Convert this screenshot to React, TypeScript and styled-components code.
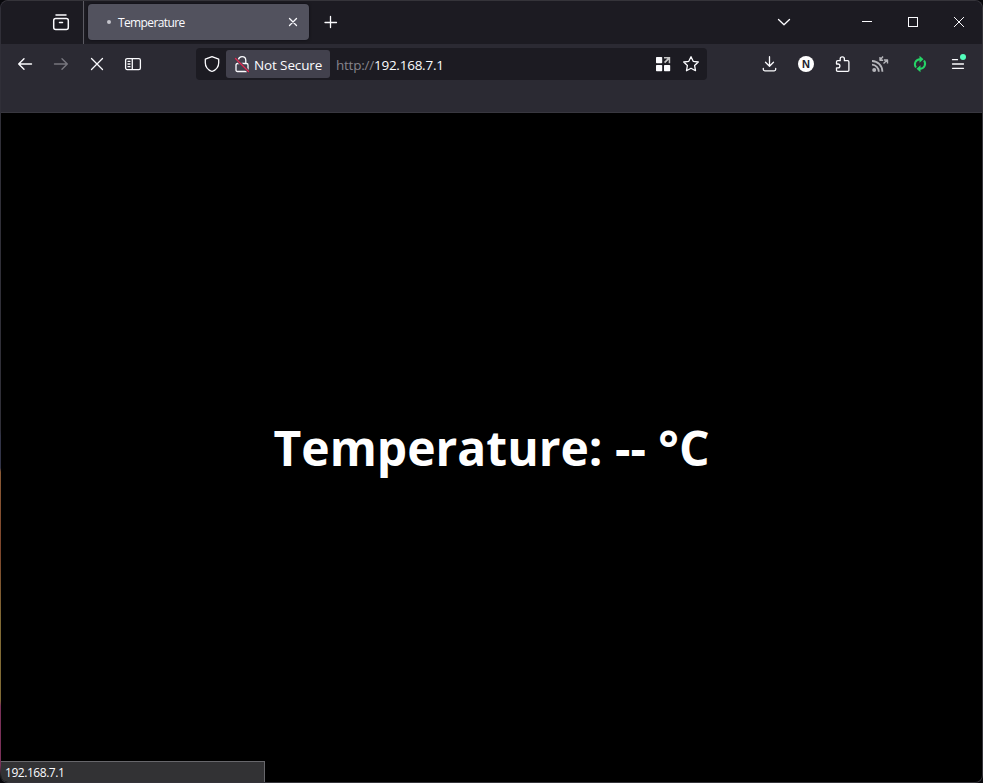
import React from 'react';
import styled, { createGlobalStyle } from 'styled-components';

const GlobalStyle = createGlobalStyle`
  *, *::before, *::after { box-sizing: border-box; }
  html, body, #root { margin: 0; height: 100%; background: #08080c; }
  body { overflow: hidden; font-family: "Open Sans", "Noto Sans", sans-serif; color: #fbfbfe; }
`;

const Window = styled.div`
  position: relative;
  width: 983px;
  height: 783px;
  display: flex;
  flex-direction: column;
  border: 1px solid #35343a;
  border-left-color: transparent;
  border-radius: 8px;
  overflow: hidden;
  background:
    linear-gradient(#1c1b22, #1c1b22) padding-box,
    linear-gradient(#302f38 0 430px, #323448 436px 468px, #8a5a35 472px, #7d452c 550px, #806a35 620px 700px, #7a3159 706px 765px, #222 775px) border-box;
`;

const TabBar = styled.header`
  height: 43px;
  flex: none;
  display: flex;
  align-items: center;
  background: #1c1b22;
`;

const ViewButton = styled.div`
  width: 83px;
  height: 43px;
  padding: 0 13px 1px 0;
  display: flex;
  align-items: center;
  justify-content: flex-end;
  border-right: 1px solid #5b5a62;
`;

const Tab = styled.div`
  width: 221px;
  height: 36px;
  margin: 0 0 1px 4px;
  padding: 0 7px 0 19px;
  display: flex;
  align-items: center;
  border-radius: 4px;
  background: #52525e;
  box-shadow: 0 0 3px #0b0b10;
`;

const LoadingDot = styled.i`
  width: 4px;
  height: 4px;
  margin: 0 7px 1px 0;
  border-radius: 50%;
  background: #c5c5cc;
`;

const TabTitle = styled.span`
  flex: 1;
  padding-top: 2px;
  font-size: 12px;
  line-height: 16px;
  letter-spacing: -0.62px;
`;

const Cell = styled.div<{ $w?: number; $gap?: number }>`
  width: ${p => p.$w ?? 36}px;
  height: 32px;
  margin-left: ${p => p.$gap ?? 0}px;
  flex: none;
  display: flex;
  align-items: center;
  justify-content: center;
`;

const TabSpacer = styled.div`
  flex: 1;
`;

const TabTools = styled.div`
  display: flex;
  align-items: center;
  margin-bottom: 1px;
`;

const Toolbar = styled.nav`
  height: 69px;
  flex: none;
  display: flex;
  align-items: flex-start;
  padding: 4px 0 0 6px;
  background: #2b2a33;
  border-bottom: 1px solid #38373f;
`;

const AddressBar = styled.div`
  width: 511px;
  height: 32px;
  margin-left: 45px;
  padding: 0 2px;
  display: flex;
  align-items: center;
  border-radius: 4px;
  background: #1c1b22;
`;

const SecurityChip = styled.div`
  width: 104px;
  height: 28px;
  padding-left: 7px;
  display: flex;
  align-items: center;
  gap: 3px;
  border-radius: 3px;
  background: #42414d;
  font-size: 13.5px;
  letter-spacing: -0.12px;
  white-space: nowrap;
`;

const ChipLabel = styled.span`
  padding-top: 2px;
`;

const Url = styled.span`
  flex: 1;
  margin-left: 6px;
  padding-top: 2px;
  font-size: 13.5px;
  letter-spacing: -0.24px;
`;

const Scheme = styled.span`
  color: #85848c;
`;

const Page = styled.main`
  flex: 1;
  display: flex;
  align-items: center;
  justify-content: center;
  background: #000;
`;

const Reading = styled.h1`
  margin: 0;
  font: 700 48px/66px "Open Sans", sans-serif;
  color: #fff;
  white-space: nowrap;
`;

const StatusPanel = styled.div`
  position: absolute;
  left: 0;
  bottom: 0;
  width: 264px;
  height: 21px;
  padding-left: 4px;
  border: solid #67676b;
  border-width: 1px 1px 0 0;
  background: #323234;
  font-size: 12px;
  line-height: 21px;
  letter-spacing: -0.45px;
`;

const Badge = styled.div`
  width: 16px;
  height: 16px;
  border-radius: 50%;
  background: #fff;
  color: #24232b;
  font: 700 11px/16px "Liberation Sans", sans-serif;
  text-align: center;
`;

const Svg = styled.svg`
  width: 18px;
  height: 18px;
  flex: none;
  overflow: visible;
  fill: none;
  stroke: currentColor;
  stroke-width: 1.3;
  stroke-linecap: round;
  stroke-linejoin: round;
`;

const Icon = ({ children, color }: { children: React.ReactNode; color?: string }) => (
  <Svg viewBox="0 0 18 18" color={color ?? '#fbfbfe'}>{children}</Svg>
);

export default function App() {
  return (
    <>
      <GlobalStyle />
      <Window>
        <TabBar>
          <ViewButton>
            <Icon>
              <path d="M4 2h10" strokeWidth="1.5" />
              <rect x="1.7" y="5.6" width="14.6" height="10.8" rx="2" strokeWidth="1.5" />
              <path d="M7.5 9.6h3" strokeWidth="1.5" />
            </Icon>
          </ViewButton>
          <Tab>
            <LoadingDot />
            <TabTitle>Temperature</TabTitle>
            <Icon><path d="M5.5 5.5l7 7m0-7l-7 7" /></Icon>
          </Tab>
          <TabTools>
            <Cell $gap={4}><Icon><path d="M8.5 3.5v11M3 9.5h11.5" /></Icon></Cell>
          </TabTools>
          <TabSpacer />
          <TabTools>
            <Cell><Icon><path d="M3.5 6.5L9 11.7l5.5-5.2" /></Icon></Cell>
            <Cell $w={46} $gap={42}><Icon><path d="M4 8.5h10" strokeWidth="1" strokeLinecap="butt" /></Icon></Cell>
            <Cell $w={46}><Icon><rect x="4.5" y="4.5" width="9" height="9" strokeWidth="1" strokeLinejoin="miter" /></Icon></Cell>
            <Cell $w={46}><Icon><path d="M4.3 4.3l9.4 9.4m0-9.4l-9.4 9.4" strokeWidth="1" /></Icon></Cell>
          </TabTools>
        </TabBar>
        <Toolbar>
          <Cell><Icon><path d="M15.500 9H2.700M8 3.700L2.700 9 8 14.300" strokeWidth="1.400" /></Icon></Cell>
          <Cell><Icon color="#77767e"><path d="M2.500 9h12.800M10 3.700L15.300 9 10 14.300" strokeWidth="1.400" /></Icon></Cell>
          <Cell><Icon><path d="M3.500 3.500l11 11m0-11l-11 11" /></Icon></Cell>
          <Cell>
            <Icon>
              <rect x="1.600" y="3.600" width="14.800" height="11" rx="1.600" />
              <path d="M8.300 3.800v10.600M4 6.300h2M4 9h2M4 11.700h2" />
            </Icon>
          </Cell>
          <AddressBar>
            <Cell $w={28}>
              <Icon><path d="M9 1.700l6.700 2.500v3.500c0 4.200-2.600 7.200-6.700 8.800-4.100-1.600-6.700-4.600-6.700-8.800V4.200z" /></Icon>
            </Cell>
            <SecurityChip>
              <Icon>
                <path d="M5.300 4.800C5.800 2.800 7.300 1.700 9 1.700c2.200 0 3.800 1.700 3.800 3.800v3M5.200 7v1.500M3 15V10q0-1.500 1.500-1.500h9Q15 8.500 15 10v5q0 1.500-1.500 1.500h-9Q3 16.500 3 15z" />
                <path d="M2.500 3.500l13 13" stroke="#42414d" strokeWidth="3" />
                <path d="M2.500 3.500l13 13" stroke="#e22850" />
              </Icon>
              <ChipLabel>Not Secure</ChipLabel>
            </SecurityChip>
            <Url><Scheme>http://</Scheme>192.168.7.1</Url>
            <Cell $w={28}>
              <Icon>
                <g fill="currentColor" stroke="none">
                  <rect x="2" y="2" width="6.200" height="6.200" rx=".7" />
                  <rect x="2" y="10" width="6.200" height="6.200" rx=".7" />
                  <rect x="10" y="10" width="6.200" height="6.200" rx=".7" />
                  <path d="M10 2h6.200v6.200h-1.500V4.800L11.200 8.200 10 7l3.400-3.400H10z" fill="#c5c5c5" />
                </g>
              </Icon>
            </Cell>
            <Cell $w={28}>
              <Icon>
                <path d="M9 1.700l2.200 4.600 5.100.7-3.700 3.500.9 5.200L9 13.300l-4.500 2.400.9-5.200L1.700 7l5.100-.7z" />
              </Icon>
            </Cell>
          </AddressBar>
          <Cell $gap={44}>
            <Icon><path d="M9.500 1.700v9.300M5.500 7.300l4 4 4-4M3.300 13.300v1q0 1.500 1.500 1.500h9.400q1.500 0 1.500-1.500v-1" /></Icon>
          </Cell>
          <Cell $gap={1}><Badge>N</Badge></Cell>
          <Cell $gap={1}>
            <Icon>
              <path d="M6.200 5.700V4a2.100 2.100 0 0 1 4.200 0v1.700h3.300q1.200 0 1.200 1.200v8.400q0 1.100-1.200 1.100H3.700q-1.200 0-1.200-1.100v-2.500h1.500a1.900 1.900 0 0 0 0-3.800H2.500V6.900q0-1.200 1.200-1.200z" />
            </Icon>
          </Cell>
          <Cell $gap={1}>
            <Icon color="#b6b6bb">
              <circle cx="3.200" cy="14.900" r="2" fill="currentColor" stroke="none" />
              <path d="M1 9.700a7 7 0 0 1 6.800 7M1 6a10.600 10.600 0 0 1 10.400 10.700" strokeWidth="1.800" strokeLinecap="butt" />
              <path d="M12 1.500L9.300 4.700M9 2v3.200h3.200M12.500 8.500l3.800-3.500M13 5h3.500v3.500" strokeWidth="1.400" strokeLinecap="butt" />
            </Icon>
          </Cell>
          <Cell $gap={4}>
            <Icon color="#25d366">
              <path d="M5 12.500C2.500 9 4.500 4.500 9 4.200M13 5.500C15.500 9 13.500 13.500 9 13.800" strokeWidth="2" strokeLinecap="butt" />
              <path d="M8.500.7l4 3.500-4 3.500zM9.500 17.300l-4-3.500 4-3.500z" fill="currentColor" stroke="none" />
            </Icon>
          </Cell>
          <Cell $gap={2}>
            <Icon>
              <path d="M3.500 4.700h5M3.500 9h11M3.500 13.300h11" />
              <circle cx="14" cy="2" r="3" fill="#54ffbd" stroke="none" />
            </Icon>
          </Cell>
        </Toolbar>
        <Page><Reading>Temperature: -- °C</Reading></Page>
        <StatusPanel>192.168.7.1</StatusPanel>
      </Window>
    </>
  );
}
